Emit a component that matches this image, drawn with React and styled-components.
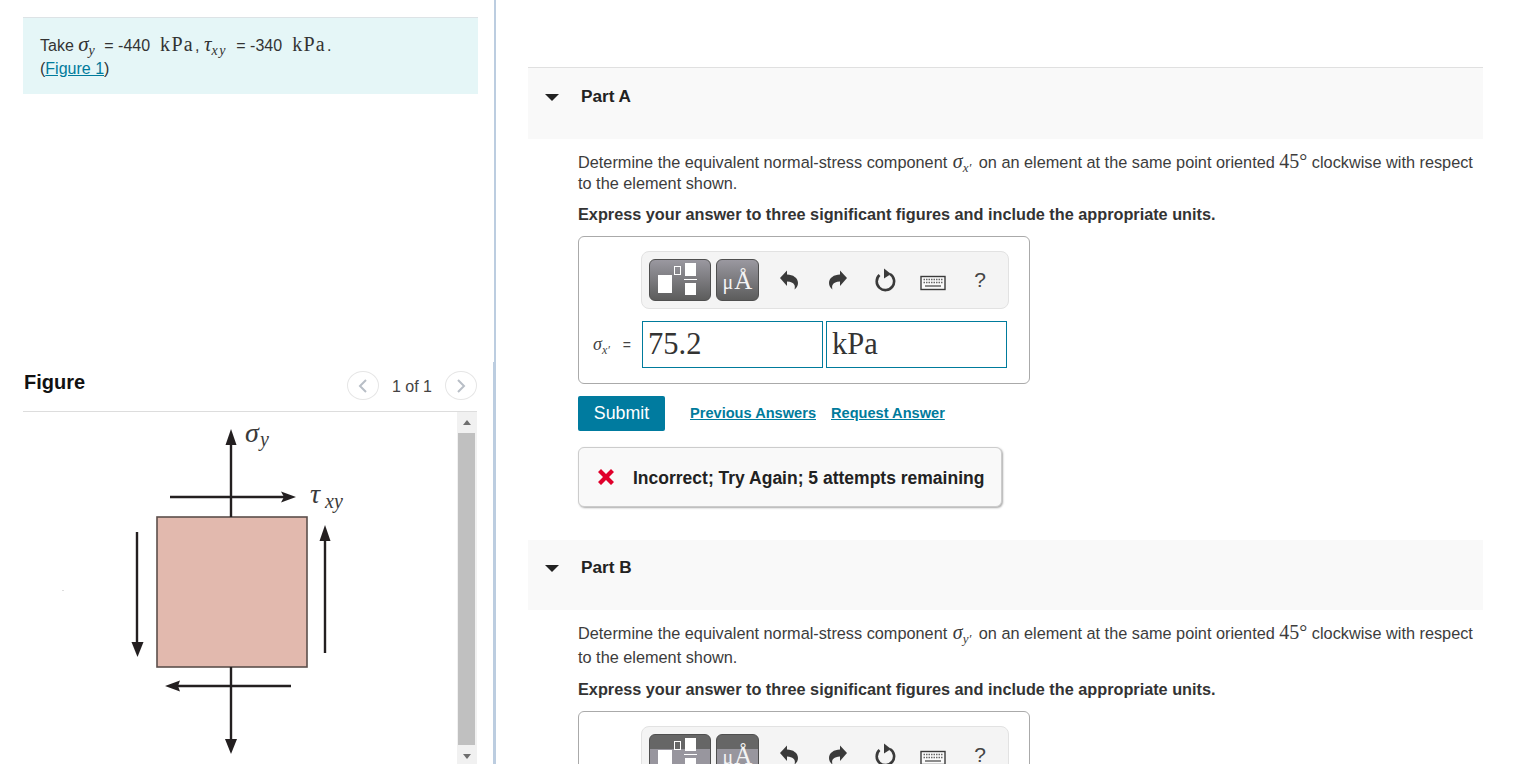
import styled, { createGlobalStyle } from "styled-components";

const GlobalStyle = createGlobalStyle`
  html, body {
    margin: 0;
    height: 764px;
    overflow: hidden;
    background: #fff;
  }
  body {
    font-family: "Liberation Sans", Arial, sans-serif;
    font-size: 16px;
    color: #333;
  }
`;

const Page = styled.div`
  display: flex;
  height: 764px;
  overflow: hidden;
`;

const LeftColumn = styled.div`
  width: 496px;
  flex: none;
  display: flex;
  flex-direction: column;
`;

const TopSection = styled.section`
  height: 345px;
  padding: 17px 0 0 23px;
  border-right: 2px solid #bccde0;
`;

const InfoBox = styled.div`
  width: 438px;
  height: 61px;
  padding: 15px 0 0 17px;
  background: #e5f6f7;
  border-top: 1px solid #dde3e6;
  line-height: 23px;
`;

const InfoLine = styled.div`
  height: 23px;
  white-space: nowrap;

  & + & {
    margin-top: 1px;
  }
`;

const TextLink = styled.a`
  color: #007b9c;
  text-decoration: underline;
`;

const MathVar = styled.span`
  font-family: "Liberation Serif", serif;
  font-style: italic;
  font-size: ${(p) => p.$size || 21}px;
  margin-left: ${(p) => p.$left || 0}px;
`;

const MathSub = styled.sub`
  font-family: "Liberation Serif", serif;
  font-style: italic;
  font-size: ${(p) => p.$size || 14}px;
  letter-spacing: ${(p) => p.$track || 0}px;
  line-height: 0;
  vertical-align: -4px;
  margin-right: ${(p) => p.$right || 0}px;
`;

const MathUnit = styled.span`
  font-family: "Liberation Serif", serif;
  font-size: 20px;
  letter-spacing: 1.3px;
  margin: 0 1px 0 10px;
`;

const MathNumber = styled.span`
  font-family: "Liberation Serif", serif;
  font-size: 20px;
`;

const FigureSection = styled.section`
  height: 402px;
  padding-left: 23px;
  border-right: 3px solid #bccde0;
  display: flex;
  flex-direction: column;
`;

const FigureHeader = styled.div`
  width: 454px;
  height: 50px;
  padding-top: 9px;
  box-sizing: border-box;
  flex: none;
  display: flex;
  align-items: flex-start;
  border-bottom: 1px solid #ddd;
`;

const FigureTitle = styled.h2`
  margin: 0 auto 0 1px;
  font-size: 20px;
  line-height: 23px;
  font-weight: bold;
  color: #111;
`;

const PagerButton = styled.button`
  width: 32px;
  height: 29px;
  padding: 0;
  display: flex;
  align-items: center;
  justify-content: center;
  background: #fff;
  border: 1px solid #e6e6e6;
  border-radius: 50%;
`;

const PagerText = styled.span`
  width: 66px;
  line-height: 32px;
  text-align: center;
  font-size: 16px;
  color: #444;
`;

const FigureBody = styled.div`
  width: 454px;
  display: flex;
  flex: 1;
  min-height: 0;
`;

const FigureCanvas = styled.svg`
  width: 434px;
  height: 352px;
  flex: none;
`;

const Scrollbar = styled.div`
  width: 20px;
  height: 352px;
  padding: 0 2px 0 1px;
  box-sizing: border-box;
  flex: none;
  display: flex;
  flex-direction: column;
  align-items: center;
  background: #f1f1f1;
`;

const ScrollArrow = styled.div`
  width: 0;
  height: 0;
  margin: ${(p) => (p.$down ? "9px" : "8px")} 0 0;
  border-left: 4.5px solid transparent;
  border-right: 4.5px solid transparent;
  border-${(p) => (p.$down ? "top" : "bottom")}: 5px solid #6f6f6f;
`;

const ScrollThumb = styled.div`
  width: 17px;
  height: 312px;
  flex: none;
  margin-top: 8px;
  background: #c0c0c0;
`;

const RightColumn = styled.main`
  flex: none;
  width: 955px;
  padding: 67px 0 0 32px;
`;

const PartHeader = styled.div`
  height: ${(p) => p.$height}px;
  display: flex;
  align-items: flex-start;
  padding: ${(p) => p.$pad}px 0 0 17px;
  box-sizing: border-box;
  background: #f9f9f9;
  border-top: ${(p) => (p.$ruled ? "1px solid #e0e0e0" : "none")};
`;

const Caret = styled.span`
  width: 0;
  height: 0;
  margin: 8px 22px 0 0;
  border-left: 7px solid transparent;
  border-right: 7px solid transparent;
  border-top: 7px solid #222;
`;

const PartTitle = styled.h3`
  margin: 0;
  font-size: 17.2px;
  font-weight: bold;
  line-height: 20px;
  color: #222;
`;

const PartBody = styled.div`
  padding-left: 50px;
`;

const Prompt = styled.p`
  margin: ${(p) => p.$top}px 0 0;
  height: ${(p) => p.$line * 2}px;
  font-size: 16.3px;
  line-height: ${(p) => p.$line}px;
  color: #3c3c3c;
  white-space: nowrap;
`;

const Hint = styled.p`
  margin: ${(p) => p.$top}px 0 0;
  font-size: 16.25px;
  font-weight: bold;
  line-height: 20px;
  color: #333;
`;

const AnswerBox = styled.div`
  width: 388px;
  height: 132px;
  margin-top: ${(p) => p.$top}px;
  border: 1px solid #aaa;
  border-radius: 6px;
  padding: 14px 0 0 62px;
`;

const Toolbar = styled.div`
  width: 368px;
  height: 58px;
  display: flex;
  align-items: flex-start;
  padding-top: 7px;
  box-sizing: border-box;
  background: #f4f4f4;
  border: 1px solid #e2e2e2;
  border-radius: 8px;
`;

const ToolButton = styled.div`
  width: ${(p) => p.$width}px;
  height: 42px;
  margin-left: ${(p) => p.$left}px;
  box-sizing: border-box;
  flex: none;
  display: flex;
  align-items: center;
  justify-content: center;
  border: 1px solid #4f4f4f;
  border-radius: 6px;
  background: linear-gradient(
    ${(p) => (p.$flip ? "#666, #666 35%, #98969e 36%" : "#9a98a0, #5c5c5c")}
  );
`;

const UnitsGlyph = styled.span`
  font-family: "Liberation Serif", serif;
  font-size: 25px;
  line-height: 1;
  color: #f4f4f4;
`;

const MicroGlyph = styled.span`
  font-size: 20px;
  margin-right: 1px;
`;

const IconSlot = styled.div`
  width: ${(p) => p.$width}px;
  height: 42px;
  padding-top: ${(p) => p.$drop || 0}px;
  box-sizing: border-box;
  flex: none;
  display: flex;
  align-items: center;
  justify-content: center;
  color: #3a3a3a;
`;

const HelpMark = styled.span`
  font-size: 21px;
  color: #444;
`;

const InputRow = styled.div`
  display: flex;
  align-items: center;
  margin-top: 12px;
  margin-left: -48px;
`;

const InputLabel = styled.span`
  width: 49px;
  flex: none;
  white-space: nowrap;
  font-size: 14px;
  color: #444;
`;

const ValueField = styled.div`
  width: 181px;
  height: 47px;
  box-sizing: border-box;
  flex: none;
  margin-right: 3px;
  padding-left: 5px;
  border: 1px solid #007b9c;
  font-family: "Liberation Serif", serif;
  font-size: 30.5px;
  line-height: 44px;
  color: #333;
`;

const ActionRow = styled.div`
  display: flex;
  align-items: center;
  margin-top: 12px;
`;

const SubmitButton = styled.button`
  width: 87px;
  height: 35px;
  padding: 0;
  border: none;
  border-radius: 2px;
  background: #007b9f;
  color: #fff;
  font-family: inherit;
  font-size: 17.8px;
`;

const ActionLink = styled(TextLink)`
  margin-left: ${(p) => p.$left}px;
  margin-bottom: 2px;
  font-size: 14.6px;
  font-weight: bold;
`;

const Feedback = styled.div`
  width: 422px;
  height: 58px;
  margin: 16px 0 33px;
  display: flex;
  align-items: center;
  background: #f9f9f9;
  border: 1px solid #ccc;
  border-radius: 6px;
  box-shadow: 1px 1px 2px #aaa;
`;

const FeedbackIcon = styled.svg`
  width: 18px;
  height: 18px;
  margin: 0 18px;
  flex: none;
`;

const FeedbackText = styled.span`
  font-size: 17.5px;
  line-height: 20px;
  padding-top: 1px;
  font-weight: bold;
  color: #222;
  white-space: nowrap;
`;

const PagerIcon = ({ flip }) => (
  <svg width="12" height="16" viewBox="0 0 12 16">
    <path
      d={flip ? "M3 2l6 6-6 6" : "M9 2L3 8l6 6"}
      fill="none"
      stroke="#b8bec6"
      strokeWidth="2"
    />
  </svg>
);

const TemplatesIcon = () => (
  <svg width="60" height="40" viewBox="1 1 60 40" fill="#fff">
    <rect x="9" y="16" width="14" height="18" />
    <rect x="25.5" y="7.5" width="6" height="8" fill="none" stroke="#fff" />
    <rect x="36" y="4" width="11" height="13" />
    <rect x="35" y="20" width="13" height="1" />
    <rect x="36" y="24" width="11" height="12" />
  </svg>
);

const UndoIcon = ({ flip }) => (
  <svg
    width="20"
    height="20"
    viewBox="0 0 20 20"
    fill="currentColor"
    style={flip ? { transform: "scaleX(-1)" } : undefined}
  >
    <path d="M1 8 8 .5v4c6 0 11 3.500 11 8.500 0 3-1.500 5-3.500 6.500 1-3.500.5-7.500-7.500-8V16z" />
  </svg>
);

const ResetIcon = () => (
  <svg width="22" height="24" viewBox="0 0 22 24" fill="none">
    <path d="M5.500 7A8.700 8.700 0 1 0 16 6" stroke="#3a3a3a" strokeWidth="2.600" />
    <path d="M10 .5 17 6l-7 4.500z" fill="#3a3a3a" />
  </svg>
);

const KeyboardIcon = () => (
  <svg width="26" height="16" viewBox="0 0 26 16">
    <rect x="1" y="1.500" width="24" height="13" fill="#fafafa" stroke="#3a3a3a" strokeWidth="1.400" />
    <path
      d="M3.500 4.500h19M3.500 7.500h19"
      stroke="#666"
      strokeWidth="1.500"
      strokeDasharray="1.500 1"
    />
    <path d="M5 11h16" stroke="#666" strokeWidth="1.500" />
  </svg>
);

const StressFigure = () => (
  <FigureCanvas viewBox="23 412 434 352">
    <rect x="62" y="590" width="2" height="1" fill="#ddd" />
    <rect x="157" y="517" width="150" height="150" fill="#e2b9ae" stroke="#5c4f4b" strokeWidth="1.600" />
    <g stroke="#231f20" strokeWidth="2.400" fill="none">
      <path d="M231 440v77M170 497h115M137 532v115M325 653V538M291 686H178M231 667v76" />
    </g>
    <g fill="#231f20">
      <path d="M231 429l5.500 16h-11z" />
      <path d="M296 497l-15 5.500 3-5.500-3-5.500z" />
      <path d="M137.500 657l-6-15h12z" />
      <path d="M325 525l5.500 16h-11z" />
      <path d="M165 686l15-5.500-2 5.500 2 5.500z" />
      <path d="M231 754l-6-15h12z" />
    </g>
    <g fontFamily="Liberation Serif, serif" fontStyle="italic" fill="#3a3a3a">
      <text x="245" y="442" fontSize="28">σ</text>
      <text x="260" y="446" fontSize="20">y</text>
      <text x="310" y="503" fontSize="28">τ</text>
      <text x="325" y="508" fontSize="20">xy</text>
    </g>
  </FigureCanvas>
);

const AnswerWidget = ({ top, flip, variable, value, unit }) => (
  <AnswerBox $top={top}>
    <Toolbar>
      <ToolButton $left={7} $width={62} $flip={flip}>
        <TemplatesIcon />
      </ToolButton>
      <ToolButton $left={5} $width={43} $flip={flip}>
        <UnitsGlyph>
          <MicroGlyph>μ</MicroGlyph>Å
        </UnitsGlyph>
      </ToolButton>
      <IconSlot $width={60}>
        <UndoIcon />
      </IconSlot>
      <IconSlot $width={38}>
        <UndoIcon flip />
      </IconSlot>
      <IconSlot $width={56}>
        <ResetIcon />
      </IconSlot>
      <IconSlot $width={40} $drop={5}>
        <KeyboardIcon />
      </IconSlot>
      <IconSlot $width={54}>
        <HelpMark>?</HelpMark>
      </IconSlot>
    </Toolbar>
    {value && (
      <InputRow>
        <InputLabel>
          <MathVar $size={18}>σ</MathVar>
          <MathSub $size={12} $right={9}>
            {variable}
          </MathSub>{" "}
          =
        </InputLabel>
        <ValueField>{value}</ValueField>
        <ValueField>{unit}</ValueField>
      </InputRow>
    )}
  </AnswerBox>
);

const PromptText = ({ variable }) => (
  <>
    Determine the equivalent normal-stress component{" "}
    <MathVar $left={1} $size={20}>
      σ
    </MathVar>
    <MathSub $size={13} $right={3}>
      {variable}
    </MathSub>{" "}
    on an element at the same point oriented <MathNumber>45°</MathNumber> clockwise with respect
    <br />
    to the element shown.
  </>
);

const hintText =
  "Express your answer to three significant figures and include the appropriate units.";

export default function App() {
  return (
    <Page>
      <GlobalStyle />
      <LeftColumn>
        <TopSection>
          <InfoBox>
            <InfoLine>
              Take <MathVar>σ</MathVar>
              <MathSub $track={1} $right={4}>
                y
              </MathSub>{" "}
              = -440
              <MathUnit>kPa</MathUnit>, <MathVar>τ</MathVar>
              <MathSub $track={1.500} $right={5}>
                xy
              </MathSub>{" "}
              = -340
              <MathUnit>kPa</MathUnit>.
            </InfoLine>
            <InfoLine>
              (<TextLink>Figure 1</TextLink>)
            </InfoLine>
          </InfoBox>
        </TopSection>
        <FigureSection>
          <FigureHeader>
            <FigureTitle>Figure</FigureTitle>
            <PagerButton>
              <PagerIcon />
            </PagerButton>
            <PagerText>1 of 1</PagerText>
            <PagerButton>
              <PagerIcon flip />
            </PagerButton>
          </FigureHeader>
          <FigureBody>
            <StressFigure />
            <Scrollbar>
              <ScrollArrow />
              <ScrollThumb />
              <ScrollArrow $down />
            </Scrollbar>
          </FigureBody>
        </FigureSection>
      </LeftColumn>
      <RightColumn>
        <PartHeader $height={72} $pad={18} $ruled>
          <Caret />
          <PartTitle>Part A</PartTitle>
        </PartHeader>
        <PartBody>
          <Prompt $top={12} $line={21}>
            <PromptText variable="x′" />
          </Prompt>
          <Hint $top={11}>{hintText}</Hint>
          <AnswerWidget top={12} variable="x′" value="75.2" unit="kPa" />
          <ActionRow>
            <SubmitButton>Submit</SubmitButton>
            <ActionLink $left={25}>Previous Answers</ActionLink>
            <ActionLink $left={15}>Request Answer</ActionLink>
          </ActionRow>
          <Feedback>
            <FeedbackIcon viewBox="0 0 18 18">
              <path d="M1 4l3-3 5 5 5-5 3 3-5 5 5 5-3 3-5-5-5 5-3-3 5-5z" fill="#e0002b" />
            </FeedbackIcon>
            <FeedbackText>Incorrect; Try Again; 5 attempts remaining</FeedbackText>
          </Feedback>
        </PartBody>
        <PartHeader $height={70} $pad={17}>
          <Caret />
          <PartTitle>Part B</PartTitle>
        </PartHeader>
        <PartBody>
          <Prompt $top={10} $line={24}>
            <PromptText variable="y′" />
          </Prompt>
          <Hint $top={11}>{hintText}</Hint>
          <AnswerWidget top={12} flip variable="y′" />
        </PartBody>
      </RightColumn>
    </Page>
  );
}
